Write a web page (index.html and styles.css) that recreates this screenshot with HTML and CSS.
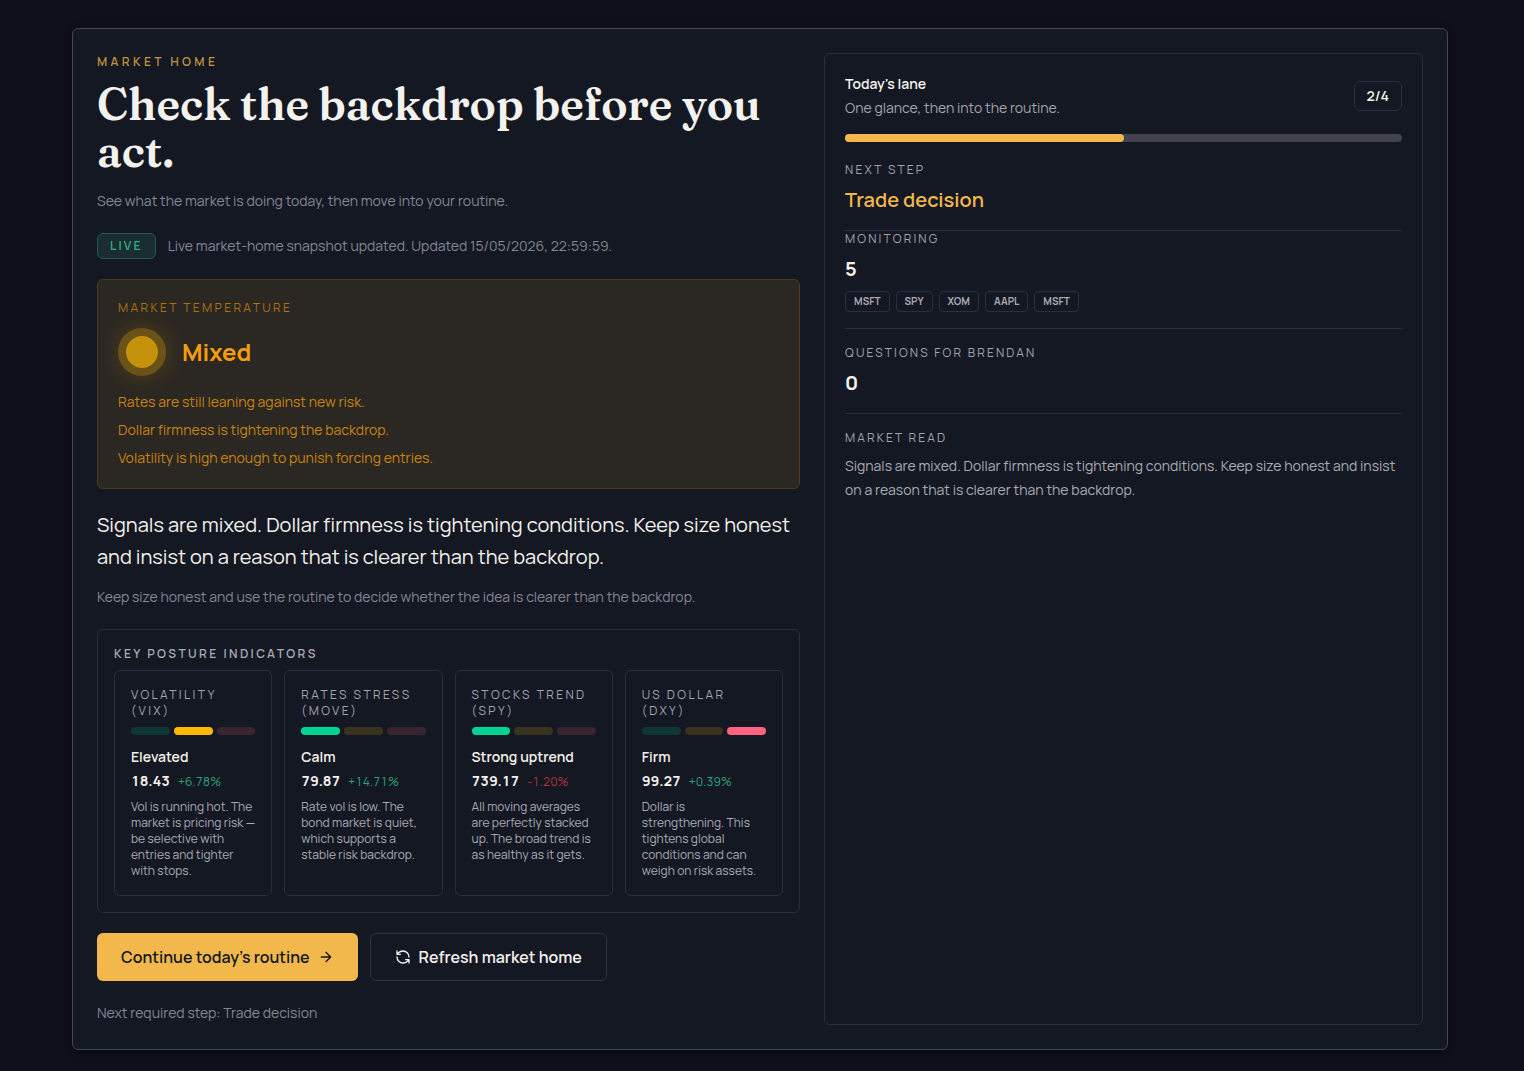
FILE: index.html
```html
<!DOCTYPE html>
<html lang="en">

<head>
    <meta charset="UTF-8" />
    <meta name="viewport" content="width=device-width, initial-scale=1.0">
    <title>Market Home</title>
    <link rel="stylesheet" href="styles.css">
</head>

<body>
    <main class="home">
        <section class="main-col">
            <header class="intro">
                <p class="eyebrow">Market home</p>
                <h1>Check the backdrop before you act.</h1>
                <p class="muted">See what the market is doing today, then move into your routine.</p>
            </header>

            <div class="status">
                <span class="live">Live</span>
                <p class="muted">Live market-home snapshot updated. Updated 15/05/2026, 22:59:59.</p>
            </div>

            <section class="temperature">
                <h2 class="label">Market temperature</h2>
                <div class="temperature-row">
                    <span class="orb"></span>
                    <strong>Mixed</strong>
                </div>
                <ul>
                    <li>Rates are still leaning against new risk.</li>
                    <li>Dollar firmness is tightening the backdrop.</li>
                    <li>Volatility is high enough to punish forcing entries.</li>
                </ul>
            </section>

            <div class="summary">
                <p class="lead">Signals are mixed. Dollar firmness is tightening conditions. Keep size honest and insist on a reason that is clearer than the backdrop.</p>
                <p class="muted">Keep size honest and use the routine to decide whether the idea is clearer than the backdrop.</p>
            </div>

            <section class="indicators">
                <h2 class="label strong">Key posture indicators</h2>
                <div class="indicator-grid">
                    <article class="indicator">
                        <h3 class="label">Volatility (VIX)</h3>
                        <div class="meter"><span class="green"></span><span class="amber on"></span><span class="red"></span></div>
                        <p class="state">Elevated</p>
                        <p class="quote"><b>18.43</b><span class="up">+6.78%</span></p>
                        <p class="note">Vol is running hot. The market is pricing risk — be selective with entries and tighter with stops.</p>
                    </article>
                    <article class="indicator">
                        <h3 class="label">Rates stress (MOVE)</h3>
                        <div class="meter"><span class="green on"></span><span class="amber"></span><span class="red"></span></div>
                        <p class="state">Calm</p>
                        <p class="quote"><b>79.87</b><span class="up">+14.71%</span></p>
                        <p class="note">Rate vol is low. The bond market is quiet, which supports a stable risk backdrop.</p>
                    </article>
                    <article class="indicator">
                        <h3 class="label">Stocks trend (SPY)</h3>
                        <div class="meter"><span class="green on"></span><span class="amber"></span><span class="red"></span></div>
                        <p class="state">Strong uptrend</p>
                        <p class="quote"><b>739.17</b><span class="down">-1.20%</span></p>
                        <p class="note">All moving averages are perfectly stacked up. The broad trend is as healthy as it gets.</p>
                    </article>
                    <article class="indicator">
                        <h3 class="label">US dollar (DXY)</h3>
                        <div class="meter"><span class="green"></span><span class="amber"></span><span class="red on"></span></div>
                        <p class="state">Firm</p>
                        <p class="quote"><b>99.27</b><span class="up">+0.39%</span></p>
                        <p class="note">Dollar is strengthening. This tightens global conditions and can weigh on risk assets.</p>
                    </article>
                </div>
            </section>

            <div class="actions">
                <button type="button" class="btn primary">
                    Continue today’s routine
                    <svg viewBox="0 0 24 24"><path d="M5 12h14M12 5l7 7-7 7" /></svg>
                </button>
                <button type="button" class="btn">
                    <svg viewBox="0 0 24 24"><path d="M21 12a9 9 0 0 0-9-9 9.75 9.75 0 0 0-6.74 2.74L3 8M3 3v5h5M3 12a9 9 0 0 0 9 9 9.75 9.75 0 0 0 6.74-2.74L21 16M16 16h5v5" /></svg>
                    Refresh market home
                </button>
            </div>

            <p class="muted">Next required step: Trade decision</p>
        </section>

        <aside class="lane">
            <div class="lane-head">
                <div>
                    <h2 class="state">Today’s lane</h2>
                    <p class="lane-sub">One glance, then into the routine.</p>
                </div>
                <span class="count">2/4</span>
            </div>
            <div class="progress" role="progressbar" aria-valuenow="2" aria-valuemin="0" aria-valuemax="4">
                <div class="progress-fill" style="width: 50%"></div>
            </div>

            <div class="step">
                <h3 class="label">Next step</h3>
                <p class="value gold">Trade decision</p>
            </div>
            <div class="step monitoring">
                <h3 class="label">Monitoring</h3>
                <p class="value">5</p>
                <div class="chips">
                    <span>MSFT</span>
                    <span>SPY</span>
                    <span>XOM</span>
                    <span>AAPL</span>
                    <span>MSFT</span>
                </div>
            </div>
            <div class="step">
                <h3 class="label">Questions for Brendan</h3>
                <p class="value">0</p>
            </div>
            <div class="step">
                <h3 class="label">Market read</h3>
                <p class="read">Signals are mixed. Dollar firmness is tightening conditions. Keep size honest and insist on a reason that is clearer than the backdrop.</p>
            </div>
        </aside>
    </main>
</body>

</html>
```
FILE: styles.css
```css
* {
    box-sizing: border-box;
}

body {
    margin: 0;
    padding: 28px 76px 20px 72px;
    font-family: Manrope, Inter, sans-serif;
    font-size: 14px;
    line-height: 20px;
    color: #f4f2ed;
    background-color: #0e0f1a;
}

h1, h2, h3, p, ul {
    margin: 0;
    padding: 0;
}

.home {
    display: grid;
    grid-template-columns: minmax(0, 1.08fr) minmax(0, 0.92fr);
    gap: 24px;
    padding: 24px;
    border: 1px solid #434859;
    border-radius: 6px;
    background-color: #141823;
    box-shadow: 0 2px 6px rgba(0, 0, 0, 0.5);
}

.main-col {
    display: flex;
    flex-direction: column;
    gap: 20px;
}

.eyebrow {
    font-size: 12px;
    line-height: 18px;
    font-weight: 600;
    letter-spacing: 0.28em;
    text-transform: uppercase;
    color: #c0923e;
}

h1 {
    margin: 10px 0 14px;
    font-family: Fraunces, "Liberation Serif", serif;
    font-size: 44px;
    line-height: 47px;
    font-weight: 600;
}

.muted {
    line-height: 24px;
    color: #838695;
}

.label {
    font-size: 12px;
    line-height: 16px;
    font-weight: 400;
    letter-spacing: 0.2em;
    text-transform: uppercase;
    color: #a2a4ae;
}

.label.strong {
    font-weight: 600;
    color: #a9abb4;
}

.status {
    display: flex;
    align-items: center;
    gap: 12px;
    height: 26px;
}

.live {
    padding: 4px 12px;
    border: 1px solid #25594f;
    border-radius: 6px;
    font-size: 12px;
    line-height: 16px;
    font-weight: 600;
    letter-spacing: 0.18em;
    text-transform: uppercase;
    color: #2eb181;
    background-color: #1a2d32;
}

.temperature {
    padding: 20px;
    border: 1px solid #503b1c;
    border-radius: 6px;
    background-color: #2b2722;
}

.temperature .label {
    color: #ae7212;
}

.temperature-row {
    display: flex;
    align-items: center;
    gap: 16px;
    margin: 12px 0 16px;
}

.temperature-row strong {
    font-size: 24px;
    line-height: 32px;
    font-weight: 700;
    color: #f59e0b;
}

.orb {
    width: 48px;
    height: 48px;
    border: 8px solid #6b5216;
    border-radius: 50%;
    background-color: #c5920b;
    box-shadow: 0 0 24px rgba(240, 177, 0, 0.2);
}

.temperature ul {
    display: flex;
    flex-direction: column;
    gap: 8px;
    list-style: none;
    color: #c88310;
}

.summary {
    display: flex;
    flex-direction: column;
    gap: 12px;
}

.lead {
    font-size: 20px;
    line-height: 32px;
}

.indicators {
    display: flex;
    flex-direction: column;
    gap: 8px;
    padding: 16px;
    border: 1px solid #2a2e3e;
    border-radius: 6px;
}

.indicator-grid {
    display: grid;
    grid-template-columns: repeat(4, minmax(0, 1fr));
    gap: 12px;
}

.indicator {
    padding: 16px;
    border: 1px solid #2a2e3e;
    border-radius: 6px;
}

.meter {
    display: flex;
    gap: 4px;
    margin: 8px 0 12px;
}

.meter span {
    flex: 1;
    height: 8px;
    border-radius: 4px;
    opacity: 0.16;
}

.meter .on {
    opacity: 1;
}

.green {
    background-color: #00d492;
}

.amber {
    background-color: #ffb900;
}

.red {
    background-color: #ff637e;
}

.state {
    font-size: 14px;
    line-height: 20px;
    font-weight: 600;
}

.quote {
    display: flex;
    align-items: baseline;
    gap: 8px;
    margin: 4px 0 8px;
    font-variant-numeric: tabular-nums;
}

.quote span {
    font-size: 12px;
    line-height: 16px;
}

.up {
    color: #2ba57b;
}

.down {
    color: #b53438;
}

.note {
    font-size: 12px;
    line-height: 16px;
    color: #a9abb4;
}

.actions {
    display: flex;
    gap: 12px;
}

.btn {
    display: flex;
    align-items: center;
    gap: 8px;
    height: 48px;
    padding: 0 24px;
    border: 1px solid #2e313e;
    border-radius: 6px;
    font-family: inherit;
    font-size: 16px;
    font-weight: 600;
    color: #f4f2ed;
    background-color: transparent;
    cursor: pointer;
}

.btn.primary {
    border: none;
    color: #141823;
    background-color: #f2b84b;
}

.btn svg {
    width: 16px;
    height: 16px;
    fill: none;
    stroke: currentColor;
    stroke-width: 2;
    stroke-linecap: round;
    stroke-linejoin: round;
}

.lane {
    padding: 20px;
    border: 1px solid #2a2e3e;
    border-radius: 6px;
}

.lane .label {
    letter-spacing: 0.18em;
}

.lane-head {
    display: flex;
    align-items: center;
    justify-content: space-between;
}

.lane-sub {
    margin-top: 4px;
    color: #a2a4ae;
}

.count {
    padding: 4px 12px;
    border: 1px solid #2a2e3e;
    border-radius: 6px;
    font-weight: 600;
}

.progress {
    height: 8px;
    margin: 16px 0 4px;
    border-radius: 4px;
    background-color: #42434e;
}

.progress-fill {
    height: 100%;
    border-radius: 4px;
    background-color: #f2b84b;
}

.step {
    padding: 16px 0;
    border-bottom: 1px solid #2a2e3e;
}

.step.monitoring {
    padding-top: 0;
}

.step:last-child {
    border-bottom: none;
}

.value {
    margin-top: 8px;
    font-size: 20px;
    line-height: 28px;
    font-weight: 700;
}

.gold {
    font-weight: 600;
    color: #f2b84b;
}

.chips {
    display: flex;
    flex-wrap: wrap;
    gap: 6px;
    margin-top: 8px;
}

.chips span {
    padding: 2px 8px;
    border: 1px solid #2a2e3e;
    border-radius: 4px;
    font-size: 10px;
    line-height: 15px;
    font-weight: 700;
    color: #a9abb4;
}

.read {
    margin-top: 8px;
    line-height: 24px;
    color: #a9abb4;
}

@media (max-width: 900px) {
    body {
        padding: 16px;
    }

    .home {
        grid-template-columns: 1fr;
    }

    .indicator-grid {
        grid-template-columns: repeat(2, minmax(0, 1fr));
    }
}
```
